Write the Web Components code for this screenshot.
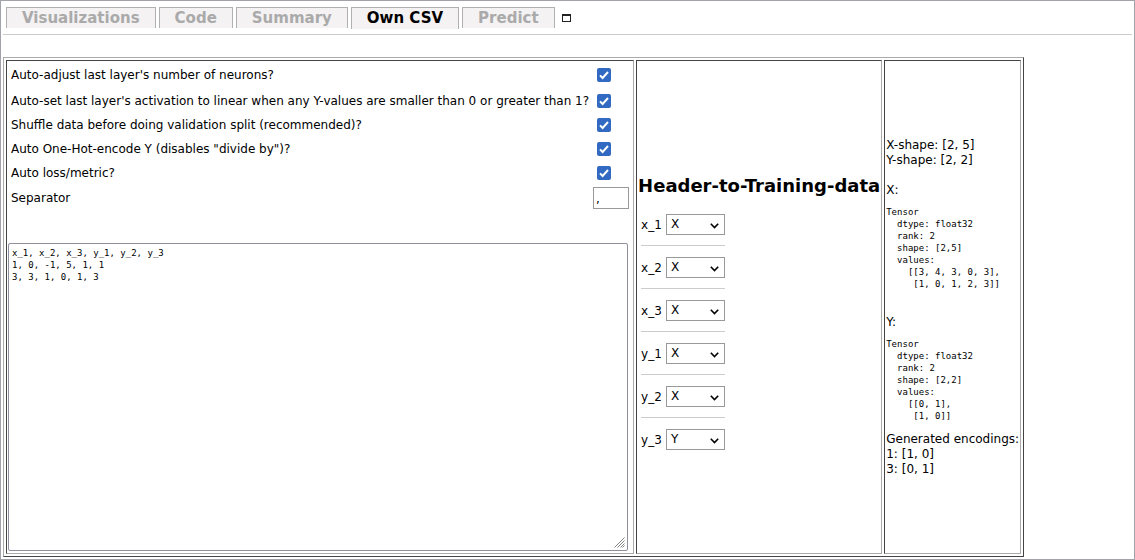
<!DOCTYPE html>
<html lang="en">
<head>
<meta charset="utf-8">
<title>Own CSV</title>
<style>
  html, body { margin: 0; }
  body { font: 12px/15px "DejaVu Sans", sans-serif; color: #000; background: #fff; }
</style>
</head>
<body>
<csv-page>
  <tab-bar slot="tabs">
    <tab-item>Visualizations</tab-item>
    <tab-item>Code</tab-item>
    <tab-item>Summary</tab-item>
    <tab-item active>Own CSV</tab-item>
    <tab-item>Predict</tab-item>
  </tab-bar>
  <panel-grid>
    <panel-cell><csv-settings></csv-settings></panel-cell>
    <panel-cell><header-mapping></header-mapping></panel-cell>
    <panel-cell><shape-preview></shape-preview></panel-cell>
  </panel-grid>
</csv-page>
<script>
  const define = (name, html, setup) => customElements.define(name, class extends HTMLElement {
    constructor() {
      super();
      this.attachShadow({ mode: 'open' }).innerHTML = html;
    }
    connectedCallback() { if (setup) setup(this, this.shadowRoot); }
  });

  define('csv-page', `
    <style>
      :host { display: block; box-sizing: border-box; min-height: 100vh; border: 1px solid #a0a3a8; padding: 6px 2px 2px; }
      hr { margin: 5px 0 22px; border: 0; border-top: 1px solid #ccc; }
    </style>
    <slot name="tabs"></slot>
    <hr>
    <slot></slot>`);

  define('tab-bar', `
    <style>
      :host { display: flex; align-items: flex-start; gap: 3px; height: 22px; padding-left: 3px; }
      button { display: flex; margin: 0 0 0 4px; padding: 7px 0 0; border: 0; background: none; }
    </style>
    <slot></slot>
    <button type="button" aria-label="Fullscreen">
      <svg width="9" height="8" viewBox="0 0 9 8"><path d="M0 0H9V8H0ZM1 2V7H8V2Z" fill="#222" fill-rule="evenodd"/></svg>
    </button>`);

  define('tab-item', `
    <style>
      :host { display: block; }
      button { display: block; margin: 0; padding: 0 15px;
        border: 1px solid #b0b0b0; border-bottom: 0; background: #f4f2f3; color: #aaa;
        font: bold 15px/20px "DejaVu Sans", sans-serif; white-space: nowrap; }
      :host([active]) button { padding-bottom: 1px; color: #000; }
    </style>
    <button type="button"><slot></slot></button>`);

  define('panel-grid', `
    <style>
      :host { display: grid; grid-template-columns: repeat(3, max-content); gap: 2px; width: max-content;
        padding: 2px; border: 1px solid; border-color: #aaa #444 #444 #aaa; }
    </style>
    <slot></slot>`);

  define('panel-cell', `
    <style>
      :host { display: flex; flex-direction: column; justify-content: center; padding: 0 1px;
        border: 1px solid; border-color: #444 #aaa #aaa #444; }
    </style>
    <slot></slot>`);

  define('csv-settings', `
    <style>
      :host { display: block; }
      form { display: grid; grid-template-columns: max-content 36px; grid-template-rows: 28px repeat(4, 24px) 26px;
        column-gap: 4px; padding: 0 3px; align-items: center; }
      input[type=checkbox] { appearance: none; width: 14px; height: 14px; margin: 0 4px; border-radius: 2px;
        background: #3269c2 url("data:image/svg+xml,%3Csvg xmlns='http://www.w3.org/2000/svg' viewBox='0 0 14 14'%3E%3Cpath d='M3 7.4 5.6 10 11 4' fill='none' stroke='white' stroke-width='2'/%3E%3C/svg%3E"); }
      input[type=text] { box-sizing: border-box; width: 36px; height: 22px; margin: 0; padding: 2px 2px 0; border: 1px solid #999;
        font: 12px/15px "DejaVu Sans", sans-serif; color: #000; }
      textarea { display: block; box-sizing: border-box; width: calc(100% - 4px); height: 308px; margin: 32px 0 2px; padding: 3px;
        border: 1px solid #8f8f9d; border-radius: 2px; font: 9px/12px "DejaVu Sans Mono", monospace; color: #000; resize: both; }
      textarea::-webkit-resizer { background: no-repeat 2px 2px / 11px 11px
        url("data:image/svg+xml,%3Csvg xmlns='http://www.w3.org/2000/svg' viewBox='0 0 11 11'%3E%3Cpath d='M.5 10.5l10-10M3.5 10.5l7-7M6.5 10.5l4-4M8.5 10.5l2-2' stroke='%23777' stroke-width='.9'/%3E%3C/svg%3E"); }
    </style>
    <form>
      <label for="neurons">Auto-adjust last layer's number of neurons?</label><input id="neurons" type="checkbox" checked>
      <label for="linear">Auto-set last layer's activation to linear when any Y-values are smaller than 0 or greater than 1?</label><input id="linear" type="checkbox" checked>
      <label for="shuffle">Shuffle data before doing validation split (recommended)?</label><input id="shuffle" type="checkbox" checked>
      <label for="onehot">Auto One-Hot-encode Y (disables "divide by")?</label><input id="onehot" type="checkbox" checked>
      <label for="loss">Auto loss/metric?</label><input id="loss" type="checkbox" checked>
      <label for="separator">Separator</label><input id="separator" type="text" value=",">
    </form>
    <textarea aria-label="CSV data" spellcheck="false">x_1, x_2, x_3, y_1, y_2, y_3
1, 0, -1, 5, 1, 1
3, 3, 1, 0, 1, 3</textarea>`);

  define('header-mapping', `
    <style>
      :host { display: block; }
      h2 { margin: 13px 0 15px; font: bold 18px/21px "DejaVu Sans", sans-serif; white-space: nowrap; }
      .rows { width: max-content; padding: 3px; }
    </style>
    <h2>Header-to-Training-data</h2>
    <div class="rows">
      <column-role name="x_1"></column-role>
      <column-role name="x_2"></column-role>
      <column-role name="x_3"></column-role>
      <column-role name="y_1"></column-role>
      <column-role name="y_2"></column-role>
      <column-role name="y_3" value="Y"></column-role>
    </div>`);

  define('column-role', `
    <style>
      :host { display: flex; align-items: center; gap: 4px; }
      :host(:not(:last-child)) { padding-bottom: 10px; margin-bottom: 11px; border-bottom: 1px solid #ccc; }
      label { width: 21px; line-height: 21px; padding-top: 1px; margin-bottom: -1px; }
      select { appearance: none; box-sizing: border-box; width: 59px; height: 21px; margin: 0; padding: 1px 4px 0;
        border: 1px solid #999; border-radius: 0; color: #000; font: 12px/15px "DejaVu Sans", sans-serif;
        background: #fff no-repeat right 5px top 8px / 9px 6px
        url("data:image/svg+xml,%3Csvg xmlns='http://www.w3.org/2000/svg' viewBox='0 0 9 6'%3E%3Cpath d='M.8.8 4.5 4.5 8.2.8' fill='none' stroke='black' stroke-width='1.6'/%3E%3C/svg%3E"); }
    </style>
    <label for="role"></label>
    <select id="role"><option>X</option><option>Y</option></select>`,
    (host, root) => {
      root.querySelector('label').textContent = host.getAttribute('name');
      root.querySelector('select').value = host.getAttribute('value') || 'X';
    });

  define('shape-preview', `
    <style>
      :host { display: block; white-space: nowrap; }
      p { margin: 0; }
      p.gap { padding-top: 15px; }
      pre { margin: 8px 0 10px; font: 9px/12px "DejaVu Sans Mono", monospace; }
    </style>
    <p>X-shape: [2, 5]<br>Y-shape: [2, 2]</p>
    <p class="gap">X:</p>
    <pre>Tensor
  dtype: float32
  rank: 2
  shape: [2,5]
  values:
    [[3, 4, 3, 0, 3],
     [1, 0, 1, 2, 3]]</pre>
    <p class="gap">Y:</p>
    <pre>Tensor
  dtype: float32
  rank: 2
  shape: [2,2]
  values:
    [[0, 1],
     [1, 0]]</pre>
    <p>Generated encodings:<br>1: [1, 0]<br>3: [0, 1]</p>`);
</script>
</body>
</html>
